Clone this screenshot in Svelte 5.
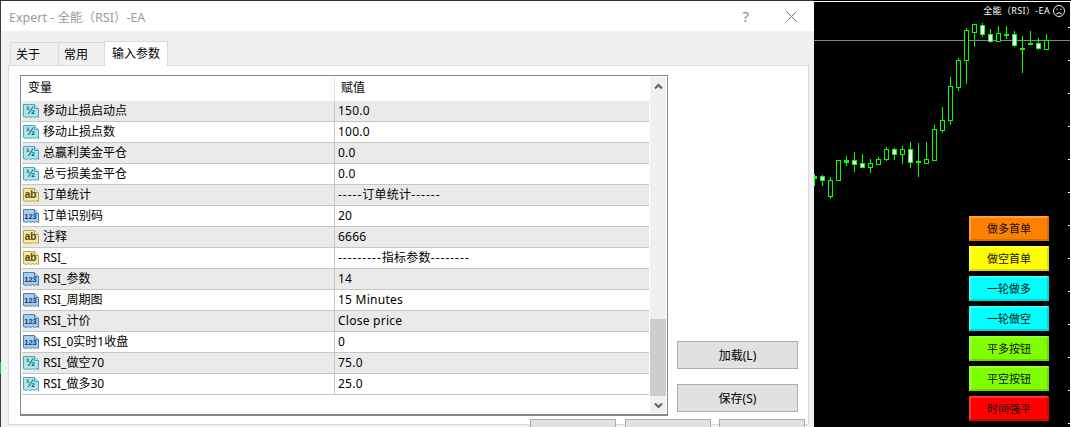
<script>
  const rows = [
    { type: 'float', name: '移动止损启动点', value: '150.0' },
    { type: 'float', name: '移动止损点数', value: '100.0' },
    { type: 'float', name: '总赢利美金平仓', value: '0.0' },
    { type: 'float', name: '总亏损美金平仓', value: '0.0' },
    { type: 'str', name: '订单统计', value: '-----订单统计------' },
    { type: 'int', name: '订单识别码', value: '20' },
    { type: 'str', name: '注释', value: '6666' },
    { type: 'str', name: 'RSI_', value: '---------指标参数--------' },
    { type: 'int', name: 'RSI_参数', value: '14' },
    { type: 'int', name: 'RSI_周期图', value: '15 Minutes' },
    { type: 'int', name: 'RSI_计价', value: 'Close price' },
    { type: 'int', name: 'RSI_0实时1收盘', value: '0' },
    { type: 'float', name: 'RSI_做空70', value: '75.0' },
    { type: 'float', name: 'RSI_做多30', value: '25.0' }
  ];

  const iconText = { float: '½', str: 'ab', int: '123' };

  // x, wick top, wick bottom, body top, body bottom, kind
  const candles = [
    [814, 174, 186, 176, 178, 'solid'],
    [822, 175, 186, 176, 180, 'up'],
    [830, 177, 199, 180, 196, 'hollow'],
    [838, 160, 180, 160, 180, 'hollow'],
    [846, 156, 166, 160, 162, 'solid'],
    [854, 152, 172, 160, 164, 'up'],
    [862, 154, 168, 163, 167, 'up'],
    [870, 159, 173, 163, 167, 'hollow'],
    [878, 157, 164, 159, 164, 'hollow'],
    [886, 147, 161, 149, 159, 'hollow'],
    [894, 148, 160, 149, 154, 'up'],
    [902, 146, 164, 149, 154, 'hollow'],
    [910, 142, 168, 149, 162, 'up'],
    [918, 143, 177, 161, 161, 'solid'],
    [926, 142, 163, 159, 163, 'hollow'],
    [934, 125, 161, 129, 160, 'hollow'],
    [942, 107, 133, 120, 130, 'hollow'],
    [950, 77, 125, 86, 120, 'hollow'],
    [958, 58, 91, 60, 87, 'hollow'],
    [966, 28, 84, 30, 60, 'hollow'],
    [974, 24, 47, 24, 32, 'hollow'],
    [982, 23, 37, 25, 34, 'up'],
    [990, 29, 43, 34, 41, 'up'],
    [998, 26, 41, 33, 41, 'hollow'],
    [1006, 26, 39, 34, 34, 'solid'],
    [1014, 31, 47, 34, 45, 'up'],
    [1022, 36, 73, 48, 48, 'solid'],
    [1030, 31, 44, 43, 44, 'solid'],
    [1038, 38, 50, 43, 48, 'up'],
    [1046, 34, 49, 40, 49, 'hollow']
  ];

  const ticks = [27, 60, 93, 126, 159, 192, 225, 258, 291, 324, 357, 390, 423];

  const chartButtons = [
    { label: '做多首单', cls: 'orange' },
    { label: '做空首单', cls: 'yellow' },
    { label: '一轮做多', cls: 'aqua' },
    { label: '一轮做空', cls: 'aqua' },
    { label: '平多按钮', cls: 'lime' },
    { label: '平空按钮', cls: 'lime' },
    { label: '时间强平', cls: 'red' }
  ];
</script>

<div class="screen">
  <div class="dialog">
    <div class="titlebar">
      <span class="title">Expert - 全能（RSI）-EA</span>
      <span class="help">?</span>
      <svg class="close" width="11" height="11" viewBox="0 0 11 11">
        <path d="M0.5 0.5 L10.5 10.5 M10.5 0.5 L0.5 10.5" />
      </svg>
    </div>

    <div class="tabs">
      <div class="tab">关于</div>
      <div class="tab">常用</div>
      <div class="tab active">输入参数</div>
    </div>

    <div class="panel">
      <div class="listbox">
        <div class="list">
          <div class="head">
            <span class="head-name">变量</span>
            <span class="head-value">赋值</span>
          </div>
          {#each rows as row, i}
            <div class="row" class:odd={i % 2 === 0}>
              <div class="cell-name">
                <svg class="icon {row.type}" width="16" height="16" viewBox="0 0 16 16">
                  <path d="M0.5 1.5 H11.5 L15.5 5.5 V14.5 L13.5 13.5 L11.5 14.5 L9.5 13.5 L7.5 14.5 L5.5 13.5 L3.5 14.5 L0.5 13.5 Z" />
                  <path class="fold" d="M11.5 1.5 V5.5 H15.5" />
                  <text x="7.5" y="11">{iconText[row.type]}</text>
                </svg>
                <span>{row.name}</span>
              </div>
              <div class="cell-value">
                {#each row.value.split(/(-+)/) as part}
                  <span class:dash={part.startsWith('-')}>{part}</span>
                {/each}
              </div>
            </div>
          {/each}
        </div>
        <div class="scrollbar">
          <svg class="arrow" width="9" height="7" viewBox="0 0 9 7">
            <path d="M1 5.5 L4.5 2 L8 5.5" />
          </svg>
          <div class="track">
            <div class="thumb"></div>
          </div>
          <svg class="arrow" width="9" height="7" viewBox="0 0 9 7">
            <path d="M1 1.5 L4.5 5 L8 1.5" />
          </svg>
        </div>
      </div>
      <div class="side">
        <button>加载(L)</button>
        <button>保存(S)</button>
      </div>
    </div>

    <div class="footer">
      <button></button>
      <button></button>
      <button></button>
    </div>
    <span class="behind"></span>
  </div>

  <div class="chart">
    <svg class="plot" width="257" height="427" viewBox="814 0 257 427">
      <line class="bid" x1="814" y1="40.5" x2="1071" y2="40.5" />
      {#each candles as [x, wt, wb, bt, bb, kind]}
        <line class="wick" x1={x + 0.5} y1={wt} x2={x + 0.5} y2={wb} />
        <rect class={kind} x={x - 1.5} y={bt + 0.5} width="4" height={Math.max(bb - bt, 1)} />
      {/each}
      <line class="axis" x1="814" y1="1.5" x2="1071" y2="1.5" />
      <line class="axis" x1="1070.5" y1="1" x2="1070.5" y2="427" />
      {#each ticks as y}
        <line class="axis" x1="1068" y1={y + 0.5} x2="1071" y2={y + 0.5} />
      {/each}
    </svg>

    <div class="chart-title">
      <span>全能（RSI）-EA</span>
      <svg width="12" height="12" viewBox="0 0 12 12">
        <circle cx="6" cy="6" r="5.5" />
        <path d="M3.2 9 Q6 6.4 8.8 9" />
        <path d="M4 3.5 V5 M8 3.5 V5" />
      </svg>
    </div>

    <div class="chart-buttons">
      {#each chartButtons as b}
        <div class="cbtn {b.cls}">{b.label}</div>
      {/each}
    </div>
  </div>
</div>

<style>
  :global(body) {
    margin: 0;
    overflow: hidden;
    font-family: 'Noto Sans', 'Noto Sans CJK SC', sans-serif;
    font-size: 12px;
    color: #000;
  }

  .screen {
    display: flex;
    width: 1071px;
    height: 427px;
    overflow: hidden;
  }

  .dialog {
    position: relative;
    width: 814px;
    flex: none;
    box-sizing: border-box;
    border-top: 1px solid #333;
    border-left: 1px solid #3a3a3a;
    background: #f0f0f0;
  }

  .behind {
    position: absolute;
    left: -1px;
    top: 361px;
    width: 1px;
    height: 12px;
    background: #22c32e;
  }

  .titlebar {
    display: flex;
    align-items: center;
    height: 30px;
    padding-left: 8px;
    background: #fff;
  }

  .title {
    flex: 1;
    font-size: 12.5px;
    color: #9a9a9a;
  }

  .help {
    font-size: 15px;
    color: #8a8a8a;
    margin-right: 37px;
  }

  .close {
    margin-right: 17px;
  }

  .close path {
    fill: none;
    stroke: #777;
    stroke-width: 1;
  }

  .tabs {
    display: flex;
    align-items: flex-end;
    height: 34px;
    padding-left: 9px;
  }

  .tab {
    box-sizing: border-box;
    height: 23px;
    padding: 2px 5px 0;
    width: 47px;
    border: 1px solid #d9d9d9;
    border-bottom: none;
    margin-right: -1px;
    line-height: 20px;
  }

  .tab:first-child {
    width: 49px;
  }

  .tab.active {
    width: 64px;
    height: 25px;
    margin-bottom: -1px;
    padding: 2px 7px 0;
    background: #fff;
    position: relative;
    z-index: 1;
    line-height: 20px;
  }

  .panel {
    display: flex;
    box-sizing: border-box;
    width: 801px;
    height: 360px;
    margin-left: 7px;
    padding: 9px 10px 9px 11px;
    background: #fff;
    border: 1px solid #d9d9d9;
  }

  .listbox {
    display: flex;
    box-sizing: border-box;
    width: 648px;
    height: 341px;
    padding: 1px;
    border: 1px solid #85878f;
    border-bottom-width: 2px;
    background: #fff;
  }

  .list {
    width: 627px;
    flex: none;
  }

  .head {
    display: grid;
    grid-template-columns: 313px 1fr;
    height: 24px;
    line-height: 22px;
  }

  .head-name {
    padding-left: 6px;
    border-right: 1px solid #e4e4e4;
  }

  .head-value {
    padding-left: 6px;
  }

  .row {
    display: grid;
    grid-template-columns: 313px 1fr;
    box-sizing: border-box;
    height: 21px;
    border-bottom: 1px solid #c6c6c6;
    line-height: 20px;
  }

  .row.odd {
    background: #eaeaea;
  }

  .cell-name {
    display: flex;
    align-items: center;
    gap: 4px;
    padding-left: 1px;
    border-right: 1px solid #c6c6c6;
  }

  .cell-value {
    padding-left: 3px;
    letter-spacing: 0.25px;
  }

  .dash {
    letter-spacing: 1px;
  }

  .icon {
    flex: none;
  }

  .icon path {
    stroke-width: 1;
  }

  .icon .fold {
    fill: none;
  }

  .icon text {
    font-family: 'Liberation Sans', sans-serif;
    font-weight: 700;
    text-anchor: middle;
  }

  .icon.float path {
    fill: #a9e6ee;
    stroke: #4aa6b8;
  }

  .icon.float text {
    fill: #1f5560;
    font-size: 11px;
  }

  .icon.str path {
    fill: #f3e9a0;
    stroke: #b9a544;
  }

  .icon.str text {
    fill: #4e4512;
    font-size: 10px;
  }

  .icon.int path {
    fill: #a6cdf0;
    stroke: #4c80b4;
  }

  .icon.int text {
    fill: #123a66;
    font-size: 7.5px;
  }

  .scrollbar {
    display: flex;
    flex-direction: column;
    align-items: center;
    width: 16px;
    margin-left: 1px;
    background: #f0f0f0;
  }

  .arrow {
    flex: none;
    margin: 6px 0 4px;
  }

  .arrow path {
    fill: none;
    stroke: #606060;
    stroke-width: 2;
  }

  .track {
    flex: 1;
    width: 100%;
    display: flex;
    flex-direction: column;
    justify-content: flex-end;
  }

  .thumb {
    height: 77px;
    background: #cdcdcd;
  }

  .side {
    display: flex;
    flex-direction: column;
    justify-content: flex-end;
    gap: 15px;
    margin-left: 9px;
    padding-bottom: 3px;
  }

  button {
    box-sizing: border-box;
    width: 121px;
    height: 28px;
    padding: 0;
    border: 1px solid #adadad;
    background: #e1e1e1;
    color: #000;
    font: inherit;
  }

  .footer {
    display: flex;
    margin: -6px 0 0 529px;
    gap: 9px;
    position: relative;
  }

  .footer button {
    width: 86px;
    flex: none;
  }

  .footer button:last-child {
    margin-left: -1px;
  }

  .chart {
    position: relative;
    flex: 1;
    background: #000;
  }

  .plot {
    display: block;
  }

  .bid {
    stroke: #778899;
  }

  .axis {
    stroke: #fff;
  }

  .wick {
    stroke: #00ff00;
  }

  .plot rect {
    stroke: #00ff00;
    fill: #000;
  }

  .plot rect.up {
    fill: #fff;
  }

  .plot rect.solid {
    fill: #00ff00;
  }

  .chart-title {
    position: absolute;
    top: 4px;
    right: 6px;
    display: flex;
    align-items: center;
    gap: 3px;
    color: #fff;
    font-size: 9px;
    letter-spacing: 0.35px;
    line-height: 13px;
  }

  .chart-title svg {
    fill: none;
    stroke: #e8f2ff;
    stroke-width: 1;
  }

  .chart-buttons {
    position: absolute;
    left: 155px;
    top: 216px;
    display: flex;
    flex-direction: column;
    gap: 5px;
  }

  .cbtn {
    box-sizing: border-box;
    width: 80px;
    height: 25px;
    border: 2px solid;
    font-size: 11px;
    line-height: 21px;
    text-align: center;
    color: #111;
  }

  .orange {
    background: #ff8000;
    border-color: #ffa033 #d96d00 #d96d00 #ffa033;
  }

  .yellow {
    background: #ffff00;
    border-color: #ffff33 #d9d900 #d9d900 #ffff33;
  }

  .aqua {
    background: #00ffff;
    border-color: #33ffff #00d9d9 #00d9d9 #33ffff;
  }

  .lime {
    background: #7fff00;
    border-color: #99ff33 #6cd900 #6cd900 #99ff33;
  }

  .red {
    background: #ff0000;
    border-color: #ff3333 #d90000 #d90000 #ff3333;
  }
</style>
